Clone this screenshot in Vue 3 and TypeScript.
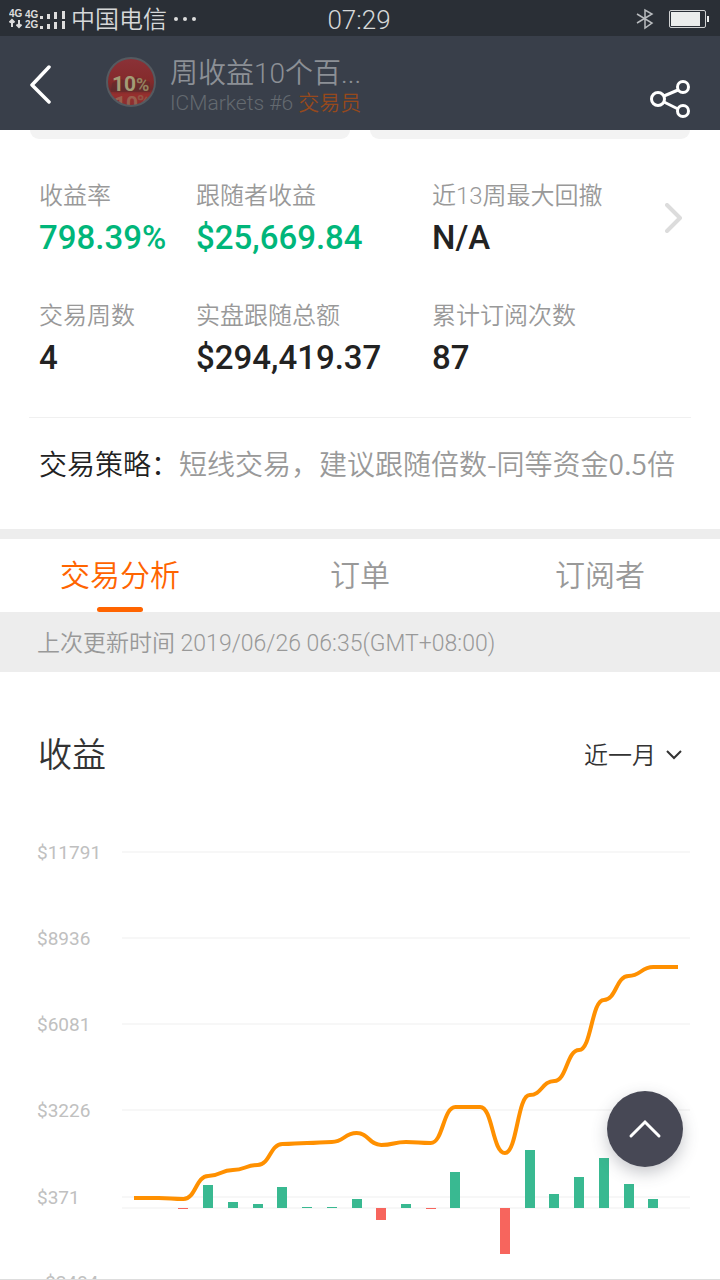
<script setup lang="ts">
import { computed, ref } from 'vue'

interface Stat { label: string; value: string; up?: boolean }

const stats: Stat[] = [
  { label: '收益率', value: '798.39%', up: true },
  { label: '跟随者收益', value: '$25,669.84', up: true },
  { label: '近13周最大回撤', value: 'N/A' },
  { label: '交易周数', value: '4' },
  { label: '实盘跟随总额', value: '$294,419.37' },
  { label: '累计订阅次数', value: '87' },
]

const tabs = ['交易分析', '订单', '订阅者']
const activeTab = ref(0)
const range = ref('近一月')

const ticks = [
  { text: '$11791', y: 32 },
  { text: '$8936', y: 118 },
  { text: '$6081', y: 204 },
  { text: '$3226', y: 290 },
  { text: '$371', y: 377 },
]

const zeroY = 388
const firstX = 134
const lastX = 678
const balance = [378, 378, 379, 356, 350, 345, 324, 323, 322, 313, 325, 322, 323, 287, 287, 333, 275, 261, 230, 180, 156, 147, 147]
const daily = [0, 0, -1, 23, 6, 4, 21, 1, 1, 9, -12, 4, -1, 36, 0, -46, 58, 14, 31, 50, 24, 9, 0]

const xAt = (i: number) => firstX + (i * (lastX - firstX)) / (balance.length - 1)

const linePath = computed(() =>
  balance.reduce((path, y, i) => {
    if (i === 0) return `M${xAt(0)} ${y}`
    const mid = (xAt(i - 1) + xAt(i)) / 2
    return `${path}C${mid} ${balance[i - 1]} ${mid} ${y} ${xAt(i)} ${y}`
  }, ''),
)

const bars = daily
  .map((v, i) => ({ x: Math.round(xAt(i)) - 5, y: v > 0 ? zeroY - v : zeroY, h: Math.abs(v), down: v < 0 }))
  .filter((b) => b.h > 0)
</script>

<template>
  <div class="screen">
    <div class="status">
      <div class="status-left">
        <svg width="58" height="22" viewBox="0 0 58 22" aria-hidden="true">
          <g class="net">
            <text x="0" y="9">4G</text>
            <text x="16" y="10">4G</text>
            <text x="16" y="20">2G</text>
          </g>
          <path d="M3 19v-7M0.500 14.500L3 12l2.500 2.500M10 12v7M7.500 16.500L10 19l2.500-2.500" fill="none" stroke="#ddd" stroke-width="2" />
          <path d="M31 8h3v3h-3zM38 6h3v5h-3zM45 4h3v7h-3zM53 3h3v8h-3zM31 18h3v3h-3zM38 16h3v5h-3zM45 14h3v7h-3zM53 13h3v8h-3z" fill="#ddd" />
        </svg>
        <span>中国电信</span>
        <svg width="28" height="6" viewBox="0 0 28 6" fill="#ddd" aria-hidden="true">
          <circle cx="5" cy="3" r="2" /><circle cx="14" cy="3" r="2" /><circle cx="23" cy="3" r="2" />
        </svg>
      </div>
      <span class="clock">07:29</span>
      <div class="status-right">
        <svg width="18" height="22" viewBox="0 0 18 22" fill="none" stroke="#b9bcbf" stroke-width="1.500" aria-hidden="true">
          <path d="M1 6l15 9-7 5V2l7 4-15 9" />
        </svg>
        <svg width="40" height="18" viewBox="0 0 40 18" aria-hidden="true">
          <rect x="0.500" y="0.500" width="36" height="17" rx="1.500" fill="none" stroke="#d0d2d3" />
          <path d="M2 2h29v14H2zM38 6h2v6h-2z" fill="#ebedec" />
        </svg>
      </div>
    </div>

    <header class="head">
      <button class="icon-btn back" aria-label="返回">
        <svg width="24" height="40" viewBox="0 0 24 40" fill="none" stroke="#fff" stroke-width="3.500" stroke-linecap="round" stroke-linejoin="round">
          <path d="M19 3L2 21l17 17" />
        </svg>
      </button>
      <svg class="avatar" width="50" height="50" viewBox="0 0 50 50" aria-hidden="true">
        <defs>
          <clipPath id="face"><circle cx="25" cy="25" r="24" /></clipPath>
          <linearGradient id="red" x1="0" y1="0" x2="0" y2="1">
            <stop offset="0" stop-color="#8b3238" />
            <stop offset="0.500" stop-color="#842a2b" />
            <stop offset="0.650" stop-color="#6d2a2c" />
            <stop offset="0.750" stop-color="#96302f" />
            <stop offset="1" stop-color="#8a2f31" />
          </linearGradient>
        </defs>
        <g clip-path="url(#face)">
          <rect width="50" height="50" fill="url(#red)" />
          <path d="M6 26l8-4 8 2 8-4 14 5v10H5z" fill="#57292b" opacity="0.500" />
          <text x="6" y="34" class="ten">10</text>
          <text x="30" y="34" class="pct">%</text>
          <g opacity="0.450">
            <text x="8" y="54" class="ten">10</text>
            <text x="31" y="51" class="pct">%</text>
          </g>
        </g>
        <circle cx="25" cy="25" r="24" fill="none" stroke="#555a60" stroke-width="2" />
      </svg>
      <div class="who">
        <h1>周收益10个百...</h1>
        <p>ICMarkets #6 <span>交易员</span></p>
      </div>
      <button class="icon-btn share" aria-label="分享">
        <svg width="40" height="40" viewBox="0 0 40 40" fill="none" stroke="#fff" stroke-width="3">
          <circle cx="8" cy="20" r="6.500" /><circle cx="33" cy="8" r="5.500" /><circle cx="33" cy="32" r="5.500" />
          <path d="M14 17l14-6M14 23l14 7" />
        </svg>
      </button>
    </header>

    <div class="cards"><div></div><div></div></div>

    <section class="summary">
      <dl class="stats">
        <div v-for="s in stats" :key="s.label">
          <dt>{{ s.label }}</dt>
          <dd :class="{ up: s.up }">{{ s.value }}</dd>
        </div>
      </dl>
      <button class="icon-btn more" aria-label="详情">
        <svg width="18" height="30" viewBox="0 0 18 30" fill="none" stroke="#dcdcdc" stroke-width="4" stroke-linecap="round" stroke-linejoin="round">
          <path d="M2 2l13 13L2 28" />
        </svg>
      </button>
    </section>

    <p class="strategy"><strong>交易策略：</strong>短线交易，建议跟随倍数-同等资金0.5倍</p>

    <nav class="tabs">
      <button v-for="(t, i) in tabs" :key="t" :class="{ active: i === activeTab }" @click="activeTab = i">{{ t }}</button>
    </nav>

    <p class="updated">上次更新时间 2019/06/26 06:35(GMT+08:00)</p>

    <section class="profit">
      <div class="profit-head">
        <h2>收益</h2>
        <div class="picker">
          <select v-model="range" aria-label="时间范围">
            <option>近一月</option>
            <option>近三月</option>
          </select>
          <svg width="18" height="12" viewBox="0 0 18 12" fill="none" stroke="#333" stroke-width="2" aria-hidden="true">
            <path d="M2 1l7 7 7-7" />
          </svg>
        </div>
      </div>
      <svg class="chart" viewBox="0 0 720 480" role="img" aria-label="收益">
        <g v-for="t in ticks" :key="t.text">
          <text x="37" :y="t.y + 7" class="tick">{{ t.text }}</text>
          <path :d="`M122 ${t.y}H690`" class="grid" />
        </g>
        <text x="45" y="469" class="tick">$2484</text>
        <path :d="`M122 ${zeroY}H690`" class="grid" />
        <rect v-for="b in bars" :key="b.x" :x="b.x" :y="b.y" width="10" :height="b.h" :class="b.down ? 'loss' : 'gain'" />
        <path :d="linePath" class="line" />
      </svg>
    </section>

    <button class="to-top" aria-label="回到顶部">
      <svg width="34" height="20" viewBox="0 0 34 20" fill="none" stroke="#fff" stroke-width="3" stroke-linecap="round">
        <path d="M3 17L17 3l14 14" />
      </svg>
    </button>
  </div>
</template>

<style>
body { margin: 0; background: #fff; }
</style>

<style scoped>
* { box-sizing: border-box; }
h1, h2, p, dl, dd { margin: 0; font-weight: inherit; }
button, select { padding: 0; border: 0; background: none; font: inherit; color: inherit; }

.screen {
  position: relative;
  display: flex;
  flex-direction: column;
  height: 100vh;
  overflow: hidden;
  border-bottom: 1px solid #ddd;
  background: #fff;
  font-family: Roboto, "Noto Sans CJK SC", sans-serif;
  font-weight: 350;
  color: #999;
}
.screen > * { flex-shrink: 0; }

.status {
  display: grid;
  grid-template-columns: 1fr auto 1fr;
  align-items: center;
  height: 36px;
  padding: 0 11px 0 9px;
  background: #2a2f36;
  color: #d6d8d9;
  font-size: 24px;
  line-height: 36px;
}
.status span { padding-top: 2px; }
.status-left { display: flex; align-items: center; gap: 4px; }
.status-right { display: flex; align-items: center; justify-content: flex-end; gap: 15px; }
.net { font: bold 10px "Liberation Sans", sans-serif; fill: #ddd; }
.clock { font-size: 26px; }

.head {
  display: flex;
  align-items: center;
  height: 94px;
  padding: 0 30px;
  background: #393f4a;
}
.icon-btn { display: flex; cursor: pointer; }
.back { width: 76px; padding-top: 2px; }
.avatar { margin-bottom: 2px; }
.ten { font-size: 21px; font-weight: 700; fill: #a39c76; }
.pct { font-size: 18px; font-weight: 700; fill: #94825f; }
.who { flex: 1; margin-left: 14px; padding-top: 5px; }
.who h1 { font-size: 28px; line-height: 34px; color: #8c9096; }
.who p { font-size: 21px; line-height: 24px; color: #646a70; }
.who span { color: #96491c; }
.share { padding-top: 32px; }

.cards { display: grid; grid-template-columns: 1fr 1fr; gap: 20px; padding: 0 30px; }
.cards div { height: 9px; border-radius: 0 0 10px 10px; background: #f3f3f3; }

.summary {
  display: flex;
  align-items: flex-start;
  margin: 0 29px;
  padding: 39px 8px 35px 10px;
  border-bottom: 1px solid #f0f0f0;
}
.stats { flex: 1; display: grid; grid-template-columns: 157fr 236fr 233fr; row-gap: 36px; }
.stats dt { font-size: 24px; line-height: 36px; white-space: nowrap; }
.stats dd { font-size: 33px; font-weight: 500; line-height: 48px; color: #222; white-space: nowrap; }
.stats .up { color: #00b67a; }
.more { padding-top: 25px; }

.strategy {
  padding: 25px 39px 46px;
  font-family: "Noto Sans CJK SC", sans-serif;
  font-size: 28px;
  line-height: 40px;
}
.strategy strong { font-weight: inherit; color: #222; }

.tabs {
  display: grid;
  grid-template-columns: repeat(3, 1fr);
  height: 83px;
  border-top: 10px solid #ededed;
  font-size: 30px;
}
.tabs button { position: relative; cursor: pointer; line-height: 73px; }
.tabs .active { color: #ff6400; }
.tabs .active::after {
  content: "";
  position: absolute;
  left: calc(50% - 23px);
  bottom: 0;
  width: 46px;
  height: 5px;
  border-radius: 3px;
  background: #ff6400;
}

.updated { padding: 4px 37px 0; background: #ededed; font-size: 23px; line-height: 56px; }

.profit-head {
  display: flex;
  align-items: center;
  justify-content: space-between;
  padding: 57px 37px 0 38px;
  color: #333;
}
.profit-head h2 { font-size: 34px; line-height: 52px; }
.picker { display: flex; align-items: center; gap: 9px; padding-top: 2px; }
.picker select { appearance: none; font-size: 24px; line-height: 36px; color: #333; outline: none; }

.chart { display: block; width: 100%; margin-top: 39px; }
.tick { font-size: 19px; font-weight: 400; fill: #c0c0c0; }
.grid { stroke: #f7f7f7; stroke-width: 2; }
.gain { fill: #39b991; }
.loss { fill: #f7655d; }
.line { fill: none; stroke: #ff9000; stroke-width: 4; }

.to-top {
  position: absolute;
  right: 37px;
  bottom: 112px;
  display: flex;
  align-items: center;
  justify-content: center;
  width: 76px;
  height: 76px;
  border-radius: 50%;
  background: #474855;
  box-shadow: 0 6px 16px rgba(71, 72, 85, 0.3);
  cursor: pointer;
}
</style>
